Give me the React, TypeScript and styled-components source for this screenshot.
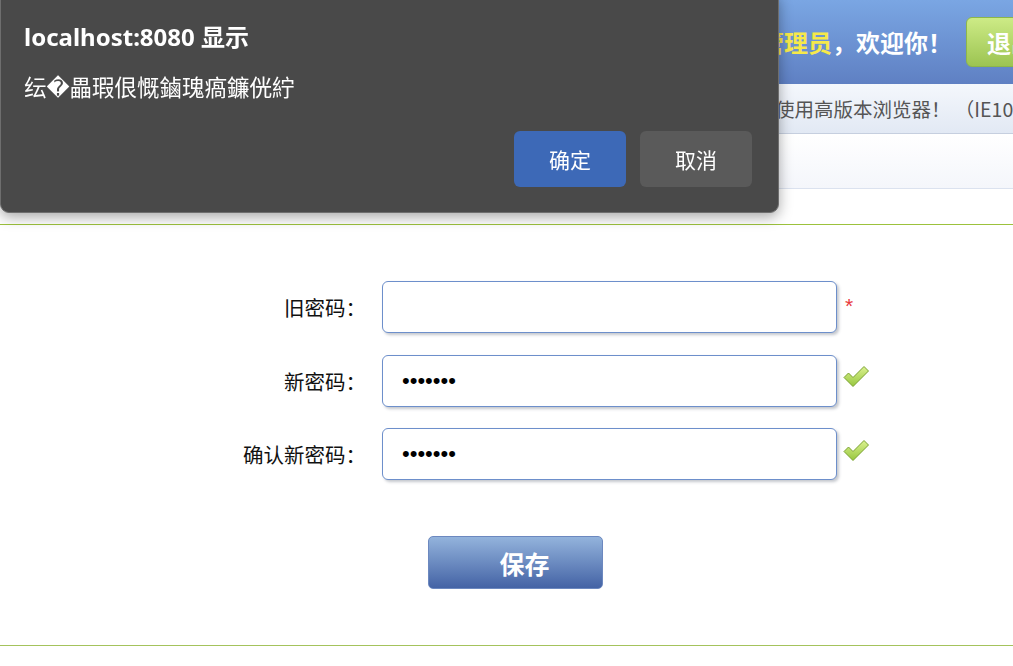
import React from "react";
import styled, { createGlobalStyle } from "styled-components";

const Global = createGlobalStyle`
  html, body { margin: 0; padding: 0; background: #fff; overflow: hidden; }
  body { font-family: "Noto Sans CJK SC", "Microsoft YaHei", sans-serif; }
  * { box-sizing: border-box; }
`;

const Page = styled.div`
  min-width: 1080px;
  height: 666px;
  background: #fff;
`;

const Header = styled.header`
  height: 84px;
  background: linear-gradient(#7aa6e3, #5f80c3);
  display: flex;
  align-items: center;
  justify-content: space-between;
  padding: 0 18px 0 24px;
`;

const Brand = styled.div`
  color: #fff;
  font-size: 28px;
  font-weight: 700;
`;

const HeaderRight = styled.div`
  display: flex;
  align-items: center;
  gap: 14px;
`;

const Welcome = styled.div`
  color: #fff;
  font-size: 24px;
  font-weight: 700;
  line-height: 32px;
`;

const Name = styled.span`
  color: #f6e94a;
`;

const Logout = styled.button`
  height: 50px;
  width: 96px;
  padding: 0 0 0 20px;
  text-align: left;
  border: 1px solid #8db64a;
  border-radius: 6px;
  background: linear-gradient(#cdeb86, #9cc452);
  color: #fff;
  font-family: inherit;
  font-size: 24px;
  font-weight: 700;
`;

const NoticeBar = styled.div`
  height: 50px;
  background: linear-gradient(#f4f7fc, #e2e9f4);
  border-bottom: 1px solid #c6cfdf;
  display: flex;
  align-items: center;
  padding-left: 658px;
`;

const Notice = styled.div`
  color: #555;
  font-size: 19.5px;
  white-space: nowrap;
`;

const TabBar = styled.div`
  height: 55px;
  background: linear-gradient(#fff, #f4f6fb);
  border-bottom: 1px solid #dbe2ef;
`;

const Main = styled.main`
  margin-top: 35px;
  border-top: 1px solid #9cc23c;
  border-bottom: 1px solid #a4c35c;
  padding: 56px 0 56px;
`;

const Form = styled.form`
  display: grid;
  grid-template-columns: 382px 455px auto;
  grid-template-rows: repeat(3, 52px) auto;
  row-gap: 21.5px;
  align-items: center;
`;

const Label = styled.label`
  justify-self: end;
  padding-right: 16px;
  font-size: 20.5px;
  color: #111;
  white-space: nowrap;
`;

const Input = styled.input`
  width: 455px;
  height: 52px;
  border: 1px solid #6d8fcb;
  border-radius: 6px;
  box-shadow: 2px 2px 3px rgba(60, 70, 90, 0.3);
  padding: 0 0 0 19px;
  font-family: "Liberation Sans", sans-serif;
  font-size: 22px;
  color: #000;
  background: #fff;
  outline: none;
`;

const Status = styled.div`
  padding-left: 6px;
  display: flex;
  align-items: center;
`;

const Required = styled.span`
  color: #e8383d;
  font-family: "Liberation Sans", sans-serif;
  font-size: 21px;
  line-height: 1;
  margin-left: 2px;
  margin-top: -4px;
`;

const CheckWrap = styled.span`
  display: flex;
  margin-top: -8px;
`;

const Actions = styled.div`
  grid-column: 2;
  align-self: start;
  margin-top: 34.5px;
  padding-left: 46px;
`;

const SaveButton = styled.button`
  width: 175px;
  height: 53px;
  border: 1px solid #6c88bf;
  border-radius: 5px;
  background: linear-gradient(#93b3dc, #4463a5);
  color: #fff;
  font-family: inherit;
  font-size: 25px;
  font-weight: 700;
  padding: 0 0 0 18px;
`;

const Overlay = styled.div`
  position: fixed;
  top: -9px;
  left: 0;
  width: 779px;
  height: 222px;
  background: #494949;
  border: 1px solid #6e6e6e;
  border-radius: 9px;
  box-shadow: 0 4px 14px rgba(0, 0, 0, 0.35);
  display: flex;
  flex-direction: column;
  padding: 29px 26px 25px 23px;
  color: #fff;
`;

const DialogTitle = styled.div`
  font-family: "Noto Sans", "Noto Sans CJK SC", sans-serif;
  font-size: 24px;
  font-weight: 700;
  line-height: 32px;
`;

const DialogMessage = styled.div`
  margin-top: 18px;
  font-family: "Noto Sans CJK SC", "DejaVu Sans", sans-serif;
  font-size: 22.5px;
  line-height: 30px;
`;

const DialogButtons = styled.div`
  margin-top: auto;
  display: flex;
  justify-content: flex-end;
  gap: 14px;
`;

const DialogButton = styled.button<{ $primary?: boolean }>`
  width: 112px;
  height: 56px;
  border: none;
  border-radius: 6px;
  background: ${(p) => (p.$primary ? "#3d69b7" : "#5a5a5a")};
  color: #fff;
  font-family: "Noto Sans CJK SC", sans-serif;
  font-size: 21px;
`;

const Check = () => (
  <CheckWrap>
    <svg width="27" height="23" viewBox="0 0 27 23">
      <defs>
        <linearGradient id="ck" x1="0" y1="0" x2="0" y2="1">
          <stop offset="0" stopColor="#dcf290" />
          <stop offset="1" stopColor="#96c63e" />
        </linearGradient>
      </defs>
      <polygon
        points="1,12.5 5.5,8 10,12.5 21,1.5 25.5,6 10,21.5"
        fill="url(#ck)"
        stroke="#7aa230"
        strokeWidth="1"
        strokeLinejoin="round"
      />
    </svg>
  </CheckWrap>
);

export default function App() {
  return (
    <>
      <Global />
      <Page>
        <Header>
          <Brand>后台管理系统</Brand>
          <HeaderRight>
            <Welcome>
              <Name>超级管理员</Name>，欢迎你！
            </Welcome>
            <Logout>退出</Logout>
          </HeaderRight>
        </Header>
        <NoticeBar>
          <Notice>温馨提示：请使用高版本浏览器！ （IE10及以上版本）</Notice>
        </NoticeBar>
        <TabBar />
        <Main>
          <Form onSubmit={(e) => e.preventDefault()}>
            <Label>旧密码：</Label>
            <Input type="password" readOnly value="" />
            <Status>
              <Required>*</Required>
            </Status>
            <Label>新密码：</Label>
            <Input type="password" readOnly value="1234567" />
            <Status>
              <Check />
            </Status>
            <Label>确认新密码：</Label>
            <Input type="password" readOnly value="1234567" />
            <Status>
              <Check />
            </Status>
            <Actions>
              <SaveButton type="submit">保存</SaveButton>
            </Actions>
          </Form>
        </Main>
      </Page>
      <Overlay>
        <DialogTitle>localhost:8080 显示</DialogTitle>
        <DialogMessage>纭�畾瑕佷慨鏀瑰瘑鐮侊紵</DialogMessage>
        <DialogButtons>
          <DialogButton $primary>确定</DialogButton>
          <DialogButton>取消</DialogButton>
        </DialogButtons>
      </Overlay>
    </>
  );
}
